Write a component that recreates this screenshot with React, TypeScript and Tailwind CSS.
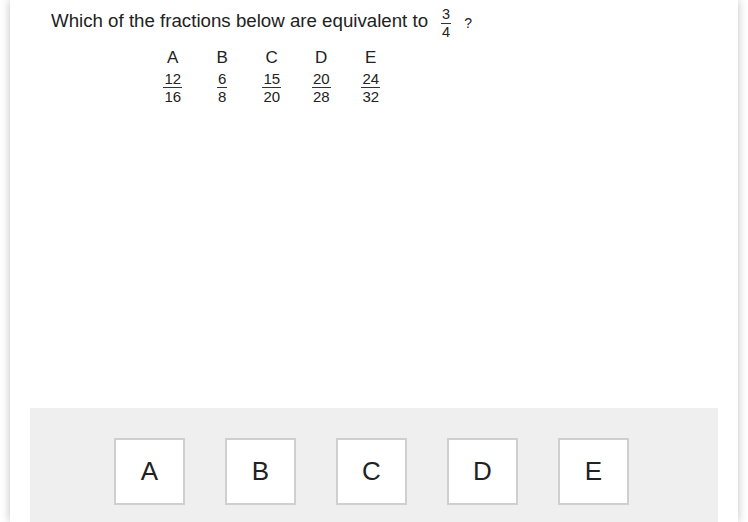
const options = [
  { letter: "A", num: "12", den: "16" },
  { letter: "B", num: "6", den: "8" },
  { letter: "C", num: "15", den: "20" },
  { letter: "D", num: "20", den: "28" },
  { letter: "E", num: "24", den: "32" },
];

function Fraction({ num, den, size }: { num: string; den: string; size: string }) {
  return (
    <div className={`flex flex-col items-center leading-none ${size}`}>
      <div className="px-[1px]">{num}</div>
      <div className="w-full h-px bg-[#333] mt-[1px]"></div>
      <div className="px-[1px] mt-[1px]">{den}</div>
    </div>
  );
}

export default function App() {
  return (
    <div
      className="w-[748px] h-[522px] bg-white px-[10px] overflow-hidden text-[#222]"
      style={{ fontFamily: '"Liberation Sans", Arial, sans-serif' }}
    >
      <div className="h-full bg-white shadow-[0_0_9px_rgba(0,0,0,0.25)] flex flex-col">
        {/* question */}
        <div className="flex items-start pl-[41px]">
          <div className="mt-[9px] text-[18.7px] leading-[24px]">Which of the fractions below are equivalent to</div>
          <div className="ml-[13px] mt-[7px]">
            <Fraction num="3" den="4" size="text-[14.5px]" />
          </div>
          <div className="ml-[13px] mt-[11px] text-[14px] leading-[24px]">?</div>
        </div>

        {/* options table */}
        <div className="ml-[138px] mt-[9.5px] flex">
          {options.map((o) => (
            <div key={o.letter} className="w-[49.5px] flex flex-col items-center">
              <div className="text-[17px] leading-none">{o.letter}</div>
              <div className="mt-[5px]">
                <Fraction num={o.num} den={o.den} size="text-[15px]" />
              </div>
            </div>
          ))}
        </div>

        {/* answer panel */}
        <div className="mt-auto mx-[20px] h-[114px] bg-[#efefef] pt-[30px] pr-[5px] flex justify-center gap-[40px]">
          {options.map((o) => (
            <div
              key={o.letter}
              className="w-[71px] h-[67px] bg-white border-2 border-[#cfcfcf] flex items-center justify-center text-[26px] text-[#222]"
            >
              {o.letter}
            </div>
          ))}
        </div>
      </div>
    </div>
  );
}
